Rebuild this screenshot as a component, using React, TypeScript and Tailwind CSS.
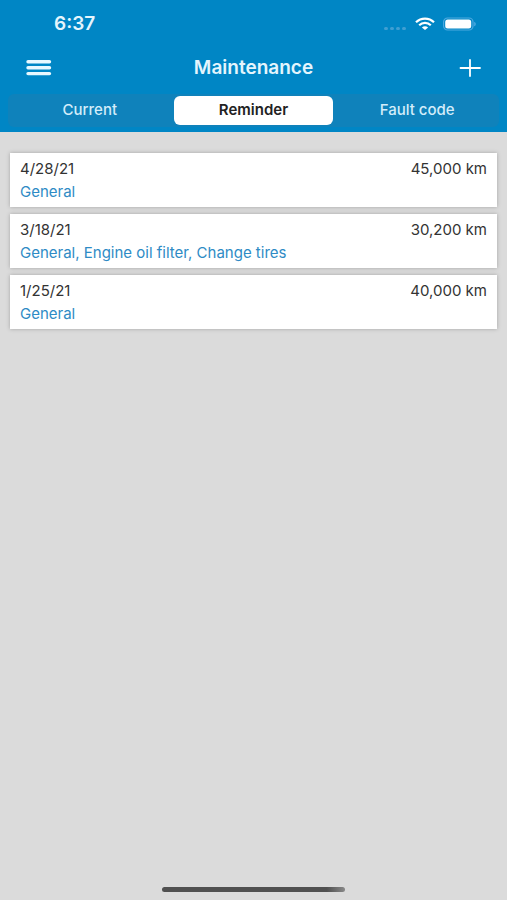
import { useState } from "react";

const TABS = ["Current", "Reminder", "Fault code"];

const REMINDERS = [
  { date: "4/28/21", mileage: "45,000 km", services: "General" },
  {
    date: "3/18/21",
    mileage: "30,200 km",
    services: "General, Engine oil filter, Change tires",
  },
  { date: "1/25/21", mileage: "40,000 km", services: "General" },
];

function StatusBar() {
  return (
    <div className="flex h-12 items-center justify-between pr-[30px] pl-[54px]">
      <p className="text-[19px] font-semibold text-[#e4f5fd]">6:37</p>
      <div className="flex items-center gap-2">
        <svg width="24" height="16" viewBox="0 0 24 16" fill="#3f9fd2" aria-hidden="true">
          <rect x="1" y="11" width="4" height="3" rx="1.5" />
          <rect x="7" y="11" width="4" height="3" rx="1.5" />
          <rect x="13" y="11" width="4" height="3" rx="1.5" />
          <rect x="19" y="11" width="4" height="3" rx="1.5" />
        </svg>
        <svg width="20" height="14" viewBox="0 0 20 14" fill="none" stroke="#fff" strokeWidth="2.2" aria-hidden="true">
          <path d="M1 5.2C6 0.3 14 0.3 19 5.2" />
          <path d="M4.2 8.2C7.5 5 12.5 5 15.8 8.2" />
          <path d="M10 13 6.9 10.5C8.6 8.9 11.4 8.9 13.1 10.5Z" fill="#fff" stroke="none" />
        </svg>
        <svg width="34" height="14" viewBox="0 0 34 14" aria-hidden="true">
          <rect x="0.6" y="1" width="29.4" height="12" rx="4" fill="none" stroke="#4da9e0" strokeWidth="1.2" />
          <rect x="2.2" y="2.5" width="26" height="9" rx="2.5" fill="#fff" />
          <path d="M31.2 4.7C33.3 5.6 33.3 8.4 31.2 9.3Z" fill="#4da9e0" />
        </svg>
      </div>
    </div>
  );
}

function NavBar() {
  return (
    <div className="grid h-10 grid-cols-[1fr_auto_1fr] items-center px-6">
      <button type="button" aria-label="Menu" className="justify-self-start">
        <svg width="28" height="20" viewBox="0 0 28 20" stroke="#e8f8ff" strokeWidth="3.4" strokeLinecap="round">
          <path d="M4 3.8H25.5M4 9.7H25.5M4 15.6H25.5" />
        </svg>
      </button>
      <h1 className="text-[19px] font-semibold text-[#e4f5fd]">Maintenance</h1>
      <button type="button" aria-label="Add reminder" className="justify-self-end">
        <svg width="26" height="20" viewBox="0 0 26 20" stroke="#fff" strokeWidth="1.8" strokeLinecap="round">
          <path d="M3.5 10H23M13 2V18" />
        </svg>
      </button>
    </div>
  );
}

export default function App() {
  const [active, setActive] = useState("Reminder");

  return (
    <div className="flex min-h-screen flex-col bg-[#dbdbdb] font-['Inter','Liberation_Sans',sans-serif]">
      <header className="bg-[#0086c5] pb-[5px]">
        <StatusBar />
        <NavBar />
        <div role="tablist" className="mx-2 mt-1.5 grid grid-cols-3 gap-1 rounded-md bg-[#0f82bb] p-0.5">
          {TABS.map((tab) => (
            <button
              key={tab}
              type="button"
              role="tab"
              aria-selected={tab === active}
              onClick={() => setActive(tab)}
              className={
                tab === active
                  ? "h-[29px] rounded-md bg-white text-[15px] font-semibold text-[#222222]"
                  : "h-[29px] rounded-md text-[15px] font-medium text-[#d3edfa]"
              }
            >
              {tab}
            </button>
          ))}
        </div>
      </header>

      <main className="flex-1 px-2.5 pt-[21px]">
        <ul className="space-y-[7px]">
          {REMINDERS.map((reminder) => (
            <li
              key={reminder.date}
              className="bg-white px-2.5 pt-1.5 pb-[5px] shadow-[0_0_4px_rgba(0,0,0,0.25)]"
            >
              <div className="flex justify-between text-[15px] leading-5 text-[#333333]">
                <p>{reminder.date}</p>
                <p>{reminder.mileage}</p>
              </div>
              <p className="mt-[3px] text-[15px] leading-5 text-[#2e8bc5]">{reminder.services}</p>
            </li>
          ))}
        </ul>
      </main>

      <div className="mx-auto mb-2 h-[5px] w-[36%] rounded-full bg-linear-to-r from-[#505050] from-90% to-[#8a8a8a]" />
    </div>
  );
}
